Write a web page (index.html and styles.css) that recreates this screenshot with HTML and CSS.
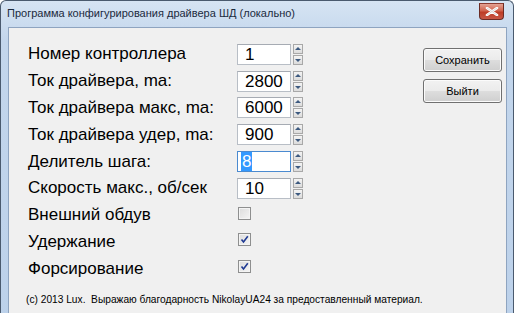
FILE: index.html
```html
<!DOCTYPE html>
<html lang="ru">
<head>
<meta charset="utf-8">
<link rel="stylesheet" href="styles.css">
</head>
<body>
<div class="window">
  <div class="titlebar">
    <span class="title">Программа конфигурирования драйвера ШД (локально)</span>
    <div class="close"><svg width="14" height="9" viewBox="0 0 14 9"><path d="M2 1 L12 8 M12 1 L2 8" stroke="#fff" stroke-width="2.6" stroke-linecap="round"/><path d="M2 1 L12 8 M12 1 L2 8" stroke="#d9d9d9" stroke-width="1" stroke-linecap="round"/></svg></div>
  </div>
  <div class="client">
    <div class="main">
      <div class="form">
        <div class="row"><span class="label">Номер контроллера</span><div class="spin"><div class="field">1</div><div class="arrows"><div class="ab up"></div><div class="ab down"></div></div></div></div>
        <div class="row"><span class="label">Ток драйвера, ma:</span><div class="spin"><div class="field">2800</div><div class="arrows"><div class="ab up"></div><div class="ab down"></div></div></div></div>
        <div class="row"><span class="label">Ток драйвера макс, ma:</span><div class="spin"><div class="field">6000</div><div class="arrows"><div class="ab up"></div><div class="ab down"></div></div></div></div>
        <div class="row"><span class="label">Ток драйвера удер, ma:</span><div class="spin"><div class="field">900</div><div class="arrows"><div class="ab up"></div><div class="ab down"></div></div></div></div>
        <div class="row"><span class="label">Делитель шага:</span><div class="spin"><div class="field focus"><span class="sel">8</span></div><div class="arrows"><div class="ab up"></div><div class="ab down"></div></div></div></div>
        <div class="row"><span class="label">Скорость макс., об/сек</span><div class="spin"><div class="field">10</div><div class="arrows"><div class="ab up"></div><div class="ab down"></div></div></div></div>
        <div class="row"><span class="label">Внешний обдув</span><div class="check"></div></div>
        <div class="row"><span class="label">Удержание</span><div class="check"><svg width="9" height="9" viewBox="0 0 9 9"><path d="M1.5 4.5 L3.5 7 L7.8 1.2" fill="none" stroke="#1f3a93" stroke-width="1.6"/></svg></div></div>
        <div class="row"><span class="label">Форсирование</span><div class="check"><svg width="9" height="9" viewBox="0 0 9 9"><path d="M1.5 4.5 L3.5 7 L7.8 1.2" fill="none" stroke="#1f3a93" stroke-width="1.6"/></svg></div></div>
      </div>
      <div class="buttons">
        <div class="btn">Сохранить</div>
        <div class="btn">Выйти</div>
      </div>
    </div>
    <div class="footer">(c) 2013 Lux.&nbsp; Выражаю благодарность NikolayUA24 за предоставленный материал.</div>
  </div>
</div>
</body>
</html>
```
FILE: styles.css
```css
html, body {
  margin: 0;
  padding: 0;
  width: 514px;
  height: 313px;
  overflow: hidden;
  background: #fff;
}
.window {
  width: 512px;
  height: 330px;
  border: 1px solid #4a5a6e;
  border-bottom: none;
  border-radius: 6px 6px 0 0;
  background: linear-gradient(#d6e4f3, #c3d6ec 40px, #bcd1ea);
  display: flex;
  flex-direction: column;
  font-family: "Liberation Sans", Arial, sans-serif;
}
.titlebar {
  height: 26px;
  display: flex;
  align-items: flex-start;
  padding-left: 6px;
  padding-right: 9px;
}
.title {
  margin-top: 6px;
  font-family: "Liberation Sans", Arial, sans-serif;
  font-size: 11px;
  color: #1b2a3d;
}
.close {
  margin-left: auto;
  margin-top: 2px;
  width: 23px;
  height: 15px;
  border: 1px solid #6b2b24;
  border-top-color: #8c3a30;
  border-radius: 0 0 4px 4px;
  background: linear-gradient(#e4a294, #d0624d 45%, #bd3c26 55%, #c75846);
  display: flex;
  align-items: center;
  justify-content: center;
}
.client {
  flex: 1;
  margin: 0 6px 0 7px;
  background: #f0f0f0;
  border: 1px solid #8ea4c0;
  border-bottom: none;
  display: flex;
  flex-direction: column;
}
.main {
  display: flex;
  padding: 13px 4px 0 19px;
}
.form {
  display: flex;
  flex-direction: column;
}
.row {
  height: 26.8px;
  display: flex;
  align-items: center;
}
.label {
  width: 209px;
  font-size: 17px;
  color: #000;
  line-height: 20px;
}
.spin {
  display: flex;
  align-items: center;
  gap: 2px;
}
.field {
  height: 19px;
  border: 1px solid #b8bec6;
  border-top-color: #a6abb3;
  background: #fff;
  font-size: 17px;
  line-height: 19px;
  padding-left: 7px;
  box-sizing: content-box;
  width: 45px;
}
.field.focus {
  border-color: #4a8ad0;
  padding-left: 3px;
  width: 49px;
}
.sel {
  background: #3399ff;
  color: #fff;
  padding: 0 1px;
}
.arrows {
  display: flex;
  flex-direction: column;
  gap: 1px;
}
.ab {
  width: 8px;
  height: 8px;
  border: 1px solid #a8a8a8;
  background: linear-gradient(#f4f4f4, #dcdcdc);
  position: relative;
}
.ab::after {
  content: "";
  position: absolute;
  left: 1px;
  width: 0;
  height: 0;
  border-left: 3px solid transparent;
  border-right: 3px solid transparent;
}
.ab.up::after {
  top: 2px;
  border-bottom: 3px solid #3d5a80;
}
.ab.down::after {
  top: 3px;
  border-top: 3px solid #3d5a80;
}
.check {
  width: 11px;
  height: 11px;
  margin-top: -4px;
  margin-left: 1px;
  border: 1px solid #8e8f8f;
  background: linear-gradient(135deg, #dcdcdc, #f5f5f5);
  box-shadow: inset 0 0 0 1px #f4f4f4;
  display: flex;
  align-items: center;
  justify-content: center;
}
.buttons {
  margin-left: auto;
  display: flex;
  flex-direction: column;
  gap: 7px;
  padding-top: 7px;
}
.btn {
  width: 77px;
  height: 22px;
  border: 1px solid #707070;
  border-radius: 3px;
  background: linear-gradient(#f2f2f2, #ebebeb 48%, #dddddd 52%, #cfcfcf);
  box-shadow: inset 0 0 0 1px #fbfbfb;
  font-size: 11px;
  line-height: 22px;
  text-align: center;
  color: #000;
}
.footer {
  padding: 12px 0 0 17px;
  font-family: "Liberation Sans", Tahoma, sans-serif;
  font-size: 10.2px;
  color: #000;
}
```
